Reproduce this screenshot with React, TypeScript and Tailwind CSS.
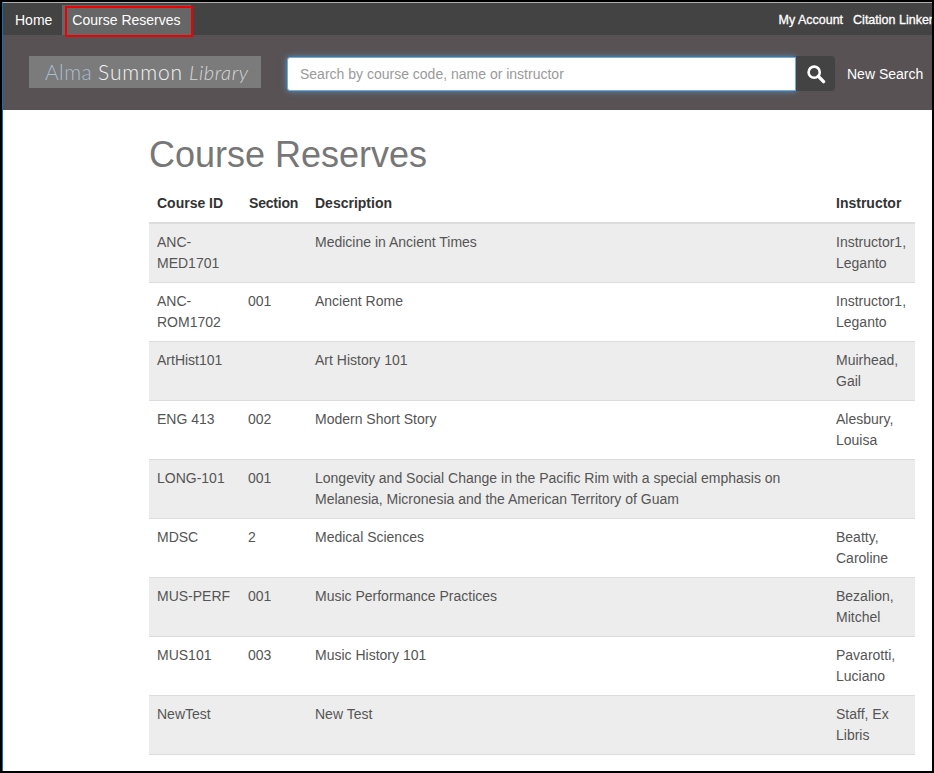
const rows: [string, string, string, string, boolean][] = [
  ["ANC-MED1701", "", "Medicine in Ancient Times", "Instructor1, Leganto", true],
  ["ANC-ROM1702", "001", "Ancient Rome", "Instructor1, Leganto", false],
  ["ArtHist101", "", "Art History 101", "Muirhead, Gail", true],
  ["ENG 413", "002", "Modern Short Story", "Alesbury, Louisa", false],
  ["LONG-101", "001", "Longevity and Social Change in the Pacific Rim with a special emphasis on Melanesia, Micronesia and the American Territory of Guam", "", true],
  ["MDSC", "2", "Medical Sciences", "Beatty, Caroline", false],
  ["MUS-PERF", "001", "Music Performance Practices", "Bezalion, Mitchel", true],
  ["MUS101", "003", "Music History 101", "Pavarotti, Luciano", false],
  ["NewTest", "", "New Test", "Staff, Ex Libris", true],
];

export default function App() {
  return (
    <div className="box-border h-[773px] w-[934px] overflow-hidden border-2 border-black bg-white font-['Liberation_Sans',Arial,sans-serif]">
      <div className="box-border h-[769px] w-[930px] overflow-hidden border-l border-t border-l-[#0a6fc2] border-t-[#b0b0b0]">
        <nav className="flex h-[32px] items-start overflow-hidden bg-[#434343] text-[14px] text-white">
          <span className="ml-[12px] mt-[9px] leading-4">Home</span>
          <span className="relative ml-[10px] mt-[2px] flex h-[30px] w-[129px] items-center bg-[#666666] pl-[10px]">
            Course Reserves
          </span>
          <span className="ml-auto mt-[9px] text-[12.5px] leading-4 [-webkit-text-stroke:0.3px_white]">My Account</span>
          <span className="ml-[10px] mr-[-1px] mt-[9px] whitespace-nowrap text-[12.5px] leading-4 [-webkit-text-stroke:0.3px_white]">Citation Linker</span>
        </nav>
        <header className="relative flex h-[75px] items-start bg-[#585254] pl-[26px] pt-[21px]">
          <span className="absolute left-[62px] top-[-29px] h-[31px] w-[128px] border-2 border-[#f00000]" />
          <div className="flex h-8 w-[232px] items-center whitespace-nowrap bg-[#7b7b7b] pl-4 text-[#f4f4f4]">
            <span className="font-['Lato',sans-serif] text-[21px] font-light tracking-[0.4px] text-[#a9bdd3]">Alma</span>
            <span className="ml-[6px] font-['Lato',sans-serif] text-[21px] font-light tracking-[0.9px]">Summon</span>
            <span className="ml-[6px] font-['Lato',sans-serif] text-[20px] font-light italic tracking-[0.6px] text-[#d8d8d8]">Library</span>
          </div>
          <div className="ml-[26px] mt-[1px] box-border flex h-[34px] w-[509px] items-center rounded-l-[3px] border border-[#66afe9] bg-white pl-[12px] text-[14px] text-[#9a9a9a] shadow-[0_0_6px_rgba(102,175,233,0.7)]">
            Search by course code, name or instructor
          </div>
          <button className="flex h-[35px] w-[39px] items-center justify-center rounded-r-[4px] bg-[#434343]">
            <svg width="20" height="20" viewBox="0 0 20 20" fill="none" stroke="white">
              <circle cx="8.2" cy="8.2" r="5.6" strokeWidth="2.6" />
              <path d="M12.4 12.4 L17.6 17.6" strokeWidth="3.4" strokeLinecap="round" />
            </svg>
          </button>
          <span className="ml-3 mt-[8px] text-[14px] leading-5 text-white">New Search</span>
        </header>
        <main className="pl-[146px] text-[14px] text-[#555555]">
          <h1 className="mt-[25px] text-[36px] font-normal leading-10 text-[#777777]">Course Reserves</h1>
          <table className="mt-[8px] w-[766px] table-fixed border-collapse">
            <colgroup>
              <col className="w-[92px]" />
              <col className="w-[66px]" />
              <col className="w-[521px]" />
              <col className="w-[87px]" />
            </colgroup>
            <thead>
              <tr className="h-[40px] border-b-2 border-[#dddddd] text-left text-[#333333]">
                <th className="pl-2 pt-[2px] font-bold">Course ID</th>
                <th className="pl-2 pt-[2px] font-bold tracking-[-0.2px]">Section</th>
                <th className="pl-2 pt-[2px] font-bold">Description</th>
                <th className="pl-2 pt-[2px] font-bold">Instructor</th>
              </tr>
            </thead>
            <tbody>
              {rows.map((r) => (
                <tr key={r[0]} className={`h-[59px] border-b border-[#dddddd] align-top leading-[21px] ${r[4] ? "bg-[#ededed]" : "bg-white"}`}>
                  <td className="px-2 pt-2 break-words">{r[0]}</td>
                  <td className="py-0 pl-[7px] pr-2 pt-2">{r[1]}</td>
                  <td className="px-2 pt-2">{r[2]}</td>
                  <td className="px-2 pt-2">{r[3]}</td>
                </tr>
              ))}
            </tbody>
          </table>
        </main>
      </div>
    </div>
  );
}
